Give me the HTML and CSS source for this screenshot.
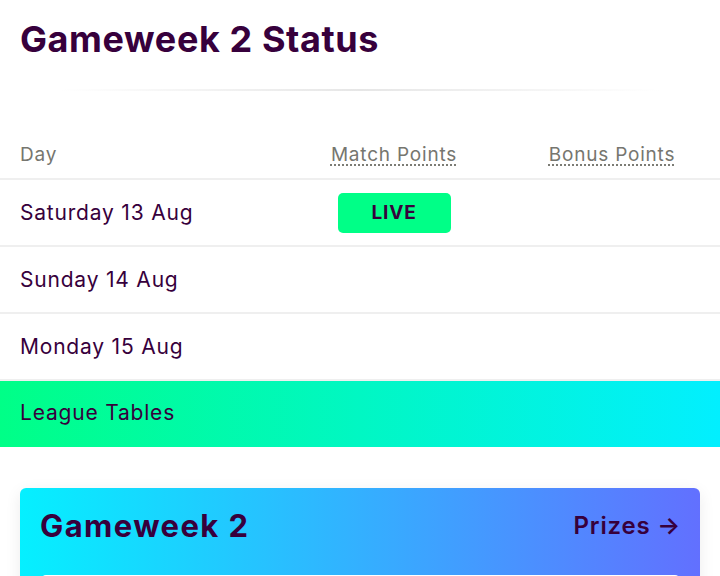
FILE: index.html
```html
<!DOCTYPE html>
<html lang="en">
  <head>
    <meta charset="UTF-8" />
    <meta name="viewport" content="width=device-width, initial-scale=1.0" />
    <title>Gameweek 2 Status</title>
    <link rel="stylesheet" href="styles.css">
  </head>
  <body>
    <h2 class="page-title">Gameweek 2 Status</h2>
    <div class="divider"></div>

    <div class="status-table">
      <div class="status-row status-head">
        <span class="cell-day">Day</span>
        <span class="cell-mid"><abbr title="Match Points">Match Points</abbr></span>
        <span class="cell-mid"><abbr title="Bonus Points">Bonus Points</abbr></span>
      </div>
      <div class="status-row">
        <span class="cell-day">Saturday 13 Aug</span>
        <span class="cell-mid"><span class="live">LIVE</span></span>
        <span class="cell-mid"></span>
      </div>
      <div class="status-row">
        <span class="cell-day">Sunday 14 Aug</span>
        <span class="cell-mid"></span>
        <span class="cell-mid"></span>
      </div>
      <div class="status-row">
        <span class="cell-day">Monday 15 Aug</span>
        <span class="cell-mid"></span>
        <span class="cell-mid"></span>
      </div>
    </div>

    <div class="league-bar">League Tables</div>

    <div class="gw-card">
      <div class="gw-card-head">
        <h3>Gameweek 2</h3>
        <a class="prizes" href="#">Prizes &rarr;</a>
      </div>
      <div class="gw-card-body"></div>
    </div>
  </body>
</html>
```

FILE: styles.css
```css
body {
  margin: 0;
  font-family: "Inter", "Noto Sans", sans-serif;
  color: #37003c;
  background: #fff;
}

.page-title {
  margin: 0;
  padding: 18px 20px 0;
  font-size: 36px;
  font-weight: 700;
  line-height: 42px;
  letter-spacing: 0.6px;
}

.divider {
  height: 2px;
  margin: 29px 60px 0;
  background: linear-gradient(to right, rgba(230, 230, 230, 0), #e6e6e6 50%, rgba(230, 230, 230, 0));
}

.status-table {
  margin-top: 40px;
}

.status-row {
  display: grid;
  grid-template-columns: 1fr 220px 176px;
  column-gap: 20px;
  align-items: center;
  height: 65px;
  padding: 0 20px;
  border-top: 2px solid #efefef;
  font-size: 21px;
  letter-spacing: 0.8px;
}

.status-row.status-head {
  height: 47px;
  box-sizing: border-box;
  padding-bottom: 12px;
  border-top: none;
  color: #76766f;
  font-size: 19px;
  letter-spacing: 0.8px;
  align-items: end;
}

.status-head abbr {
  text-decoration: underline dotted;
  text-underline-offset: 4px;
}

.cell-mid {
  text-align: center;
}

.live {
  display: inline-block;
  width: 113px;
  height: 40px;
  line-height: 40px;
  border-radius: 5px;
  background: #00ff87;
  font-size: 19px;
  font-weight: 700;
  letter-spacing: 0.8px;
}

.league-bar {
  height: 66px;
  line-height: 64px;
  padding: 0 20px;
  border-top: 2px solid #efefef;
  background: linear-gradient(to right, #00ff87, #02efff);
  font-size: 21px;
  letter-spacing: 0.8px;
}

.gw-card {
  margin: 41px 20px 0;
  border-radius: 6px;
  background: linear-gradient(to right, #05f0ff, #6270ff);
  box-shadow: 0 4px 16px rgba(0, 0, 0, 0.08);
  padding: 17px 19px 20px 20px;
}

.gw-card-head {
  display: flex;
  justify-content: space-between;
  align-items: center;
  height: 40px;
  margin-bottom: 30px;
}

.gw-card-head h3 {
  margin: 0;
  font-size: 31px;
  font-weight: 700;
  letter-spacing: 1.4px;
}

.prizes {
  color: #37003c;
  text-decoration: none;
  font-size: 24px;
  font-weight: 600;
  letter-spacing: 0.8px;
}

.gw-card-body {
  height: 80px;
  margin: 0 2px;
  background: #fff;
  border-radius: 4px;
}
```
